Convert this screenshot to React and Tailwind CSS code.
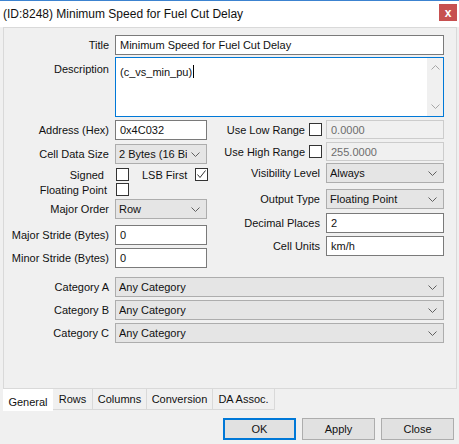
import React from "react";

const Chevron = ({ color = "#606060", up = false }) => (
  <svg width="9" height="5" viewBox="0 0 9 5" fill="none" className="shrink-0">
    <polyline
      points={up ? "0.5,4.5 4.5,0.5 8.5,4.5" : "0.5,0.5 4.5,4.5 8.5,0.5"}
      stroke={color}
      strokeWidth="1"
    />
  </svg>
);

function Combo({ value, w }) {
  return (
    <div className={`flex h-[20px] items-center border border-[#adadad] bg-[#e5e5e5] pl-[3px] pr-[6px] ${w}`}>
      <span className="mr-[4px] min-w-0 flex-1 overflow-hidden whitespace-nowrap">{value}</span>
      <Chevron />
    </div>
  );
}

function TextBox({ value, w, h = "h-[20px]" }) {
  return (
    <div className={`flex items-center border border-[#7a7a7a] bg-white pl-[4px] ${h} ${w}`}>
      <span className="whitespace-nowrap">{value}</span>
    </div>
  );
}

function DisabledBox({ value }) {
  return (
    <div className="flex h-[19px] w-[118px] items-center border border-[#cccccc] bg-[#f0f0f0] pl-[4px] text-[#6d6d6d]">
      {value}
    </div>
  );
}

function Check({ checked }) {
  return (
    <div className="flex h-[13px] w-[13px] shrink-0 items-center justify-center border border-[#333333] bg-white">
      {checked && (
        <svg width="11" height="11" viewBox="0 0 11 11" fill="none">
          <polyline points="1.5,5.5 4,8.5 9.5,1.5" stroke="#333" strokeWidth="1" />
        </svg>
      )}
    </div>
  );
}

function LeftRow({ label, children, className = "" }) {
  return (
    <div className={`flex items-center ${className}`}>
      <div className="w-[105px] shrink-0 text-right whitespace-nowrap">{label}</div>
      <div className="ml-[6px]">{children}</div>
    </div>
  );
}

function RightRow({ label, check, children, className = "" }) {
  return (
    <div className={`flex items-center ${className}`}>
      <div className="flex w-[114px] shrink-0 items-center justify-end gap-[4px] whitespace-nowrap">
        <span className={check ? "" : "pr-[2px]"}>{label}</span>
        {check && <Check />}
      </div>
      <div className="ml-[4px]">{children}</div>
    </div>
  );
}

export default function App() {
  return (
    <div className="flex h-[444px] w-[459px] flex-col overflow-hidden border-t border-[#3c83d0] bg-[#f0f0f0] font-['Liberation_Sans',Arial,sans-serif] text-[11px] leading-[14px] text-[#111]">
      {/* Title bar */}
      <div className="flex h-[26px] shrink-0 items-start justify-between bg-white">
        <div className="pl-[3px] pt-[6px] text-[12px] leading-[14px] whitespace-nowrap">
          (ID:8248) Minimum Speed for Fuel Cut Delay
        </div>
        <div className="mr-[2px] mt-[3px] flex h-[17px] w-[18px] items-center justify-center bg-[#c75050] text-[12px] font-bold leading-none text-white">
          x
        </div>
      </div>

      {/* Tab page */}
      <div className="ml-[3px] flex h-[362px] w-[454px] shrink-0 flex-col border border-[#d9d9d9]">
        <LeftRow label="Title" className="mt-[7px] h-[20px]">
          <TextBox value="Minimum Speed for Fuel Cut Delay" w="w-[329px]" />
        </LeftRow>

        <div className="mt-[2px] flex items-start">
          <div className="w-[105px] pt-[5px] text-right">Description</div>
          <div className="ml-[6px] flex h-[60px] w-[329px] border border-[#0078d7] bg-white">
            <div className="flex-1 pl-[4px] pt-[5px]">
              (c_vs_min_pu)<span className="ml-[1px] inline-block h-[13px] w-[1px] translate-y-[2px] bg-black" />
            </div>
            <div className="flex w-[16px] flex-col items-center justify-between bg-[#f0f0f0] py-[7px]">
              <Chevron color="#a6a6a6" up />
              <Chevron color="#a6a6a6" />
            </div>
          </div>
        </div>

        {/* Two columns */}
        <div className="mt-[3px] flex">
          <div className="flex w-[204px] shrink-0 flex-col">
            <LeftRow label="Address (Hex)" className="h-[20px]">
              <TextBox value="0x4C032" w="w-[92px]" />
            </LeftRow>
            <LeftRow label="Cell Data Size" className="mt-[4px] h-[20px]">
              <Combo value="2 Bytes (16 Bit" w="w-[92px]" />
            </LeftRow>
            <div className="mt-[4px] flex h-[13px] items-center whitespace-nowrap">
              <div className="w-[100px] shrink-0 text-right">Signed</div>
              <div className="ml-[12px]">
                <Check />
              </div>
              <span className="ml-[13px] w-[41px] shrink-0">LSB First</span>
              <div className="ml-[12px]">
                <Check checked />
              </div>
            </div>
            <div className="mt-[2px] flex h-[13px] items-center">
              <div className="w-[103px] shrink-0 text-right whitespace-nowrap">Floating Point</div>
              <div className="ml-[9px]">
                <Check />
              </div>
            </div>
            <LeftRow label="Major Order" className="mt-[3px] h-[20px]">
              <Combo value="Row" w="w-[92px]" />
            </LeftRow>
            <LeftRow label="Major Stride (Bytes)" className="mt-[6px] h-[20px]">
              <TextBox value="0" w="w-[92px]" />
            </LeftRow>
            <LeftRow label="Minor Stride (Bytes)" className="mt-[3px] h-[20px]">
              <TextBox value="0" w="w-[92px]" />
            </LeftRow>
          </div>

          <div className="flex flex-col">
            <RightRow label="Use Low Range" check className="h-[19px]">
              <DisabledBox value="0.0000" />
            </RightRow>
            <RightRow label="Use High Range" check className="mt-[3px] h-[19px]">
              <DisabledBox value="255.0000" />
            </RightRow>
            <RightRow label="Visibility Level" className="mt-[2px] h-[20px]">
              <Combo value="Always" w="w-[118px]" />
            </RightRow>
            <RightRow label="Output Type" className="mt-[6px] h-[20px]">
              <Combo value="Floating Point" w="w-[118px]" />
            </RightRow>
            <RightRow label="Decimal Places" className="mt-[4px] h-[20px]">
              <TextBox value="2" w="w-[118px]" />
            </RightRow>
            <RightRow label="Cell Units" className="mt-[3px] h-[20px]">
              <TextBox value="km/h" w="w-[118px]" />
            </RightRow>
          </div>
        </div>

        <div className="mt-[9px] flex flex-col gap-[3px]">
          <LeftRow label="Category A" className="h-[20px]">
            <Combo value="Any Category" w="w-[329px]" />
          </LeftRow>
          <LeftRow label="Category B" className="h-[20px]">
            <Combo value="Any Category" w="w-[329px]" />
          </LeftRow>
          <LeftRow label="Category C" className="h-[20px]">
            <Combo value="Any Category" w="w-[329px]" />
          </LeftRow>
        </div>
      </div>

      {/* Tabs */}
      <div className="ml-[3px] flex h-[22px] shrink-0 items-start whitespace-nowrap">
        <div className="flex h-[22px] w-[50px] items-center justify-center bg-white pt-[3px]">General</div>
        <div className="flex h-[21px] w-[40px] items-center justify-center border-b border-r border-[#d9d9d9]">Rows</div>
        <div className="flex h-[21px] w-[54px] items-center justify-center border-b border-r border-[#d9d9d9]">Columns</div>
        <div className="flex h-[21px] w-[66px] items-center justify-center border-b border-r border-[#d9d9d9]">Conversion</div>
        <div className="flex h-[21px] w-[62px] items-center justify-center border-b border-r border-[#d9d9d9]">DA Assoc.</div>
      </div>

      {/* Buttons */}
      <div className="mt-[7px] flex justify-end gap-[6px] pr-[5px]">
        <div className="flex h-[22px] w-[73px] items-center justify-center border-2 border-[#0078d7] bg-[#e1e1e1]">OK</div>
        <div className="flex h-[22px] w-[73px] items-center justify-center border border-[#adadad] bg-[#e1e1e1]">Apply</div>
        <div className="flex h-[22px] w-[73px] items-center justify-center border border-[#adadad] bg-[#e1e1e1]">Close</div>
      </div>
    </div>
  );
}
